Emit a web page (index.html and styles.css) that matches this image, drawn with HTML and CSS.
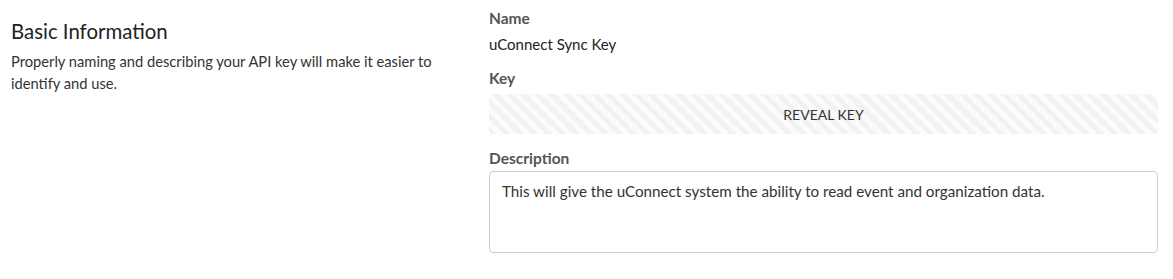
FILE: index.html
```html
<!DOCTYPE html>
<html lang="en">
<head>
    <meta charset="UTF-8">
    <meta name="viewport" content="width=device-width, initial-scale=1.0">
    <title>API Key</title>
    <link rel="stylesheet" href="styles.css">
</head>
<body>
    <div class="section">
        <div class="section-info">
            <h2>Basic Information</h2>
            <p>Properly naming and describing your API key will make it easier to identify and use.</p>
        </div>
        <div class="section-fields">
            <div class="field">
                <label>Name</label>
                <div class="field-value">uConnect Sync Key</div>
            </div>
            <div class="field">
                <label>Key</label>
                <button class="reveal-key">REVEAL KEY</button>
            </div>
            <div class="field field-description">
                <label>Description</label>
                <textarea readonly>This will give the uConnect system the ability to read event and organization data.</textarea>
            </div>
        </div>
    </div>
</body>
</html>
```

FILE: styles.css
```css
:root {
    --text-color: #222;
    --label-color: #555;
    --border-color: #ccc;
    --stripe-dark: #f2f2f2;
    --stripe-light: #fbfbfb;
}

body {
    margin: 0;
    background-color: white;
    font-family: Lato, "Liberation Sans", sans-serif;
    color: var(--text-color);
}

.section {
    display: grid;
    grid-template-columns: 467px 1fr;
    column-gap: 11px;
    padding: 0 15px 0 11px;
}

.section-info h2 {
    margin: 17px 0 5px;
    font-size: 20.4px;
    font-weight: normal;
    line-height: 28px;
}
.section-info p {
    margin: 0;
    font-size: 14.7px;
    line-height: 22px;
    color: #333;
    padding-right: 20px;
}

.section-fields {
    padding-top: 8px;
}

.field {
    margin-bottom: 14px;
}
.field label {
    display: block;
    font-size: 15.5px;
    font-weight: bold;
    line-height: 20px;
    color: var(--label-color);
    margin-bottom: 6px;
}
.field-value {
    font-size: 15px;
    line-height: 20px;
}
.field-description label {
    margin-bottom: 3px;
}

.reveal-key {
    display: block;
    width: 100%;
    height: 40px;
    border: none;
    border-radius: 4px;
    background: repeating-linear-gradient(45deg, var(--stripe-dark) 0, var(--stripe-dark) 5px, var(--stripe-light) 5px, var(--stripe-light) 10px);
    font-family: inherit;
    font-size: 14px;
    color: #333;
    cursor: pointer;
}

textarea {
    display: block;
    box-sizing: border-box;
    width: 100%;
    height: 82px;
    padding: 9px 12px;
    border: 1px solid var(--border-color);
    border-radius: 4px;
    font-family: inherit;
    font-size: 15.2px;
    line-height: 20px;
    color: #333;
    resize: none;
}
```
